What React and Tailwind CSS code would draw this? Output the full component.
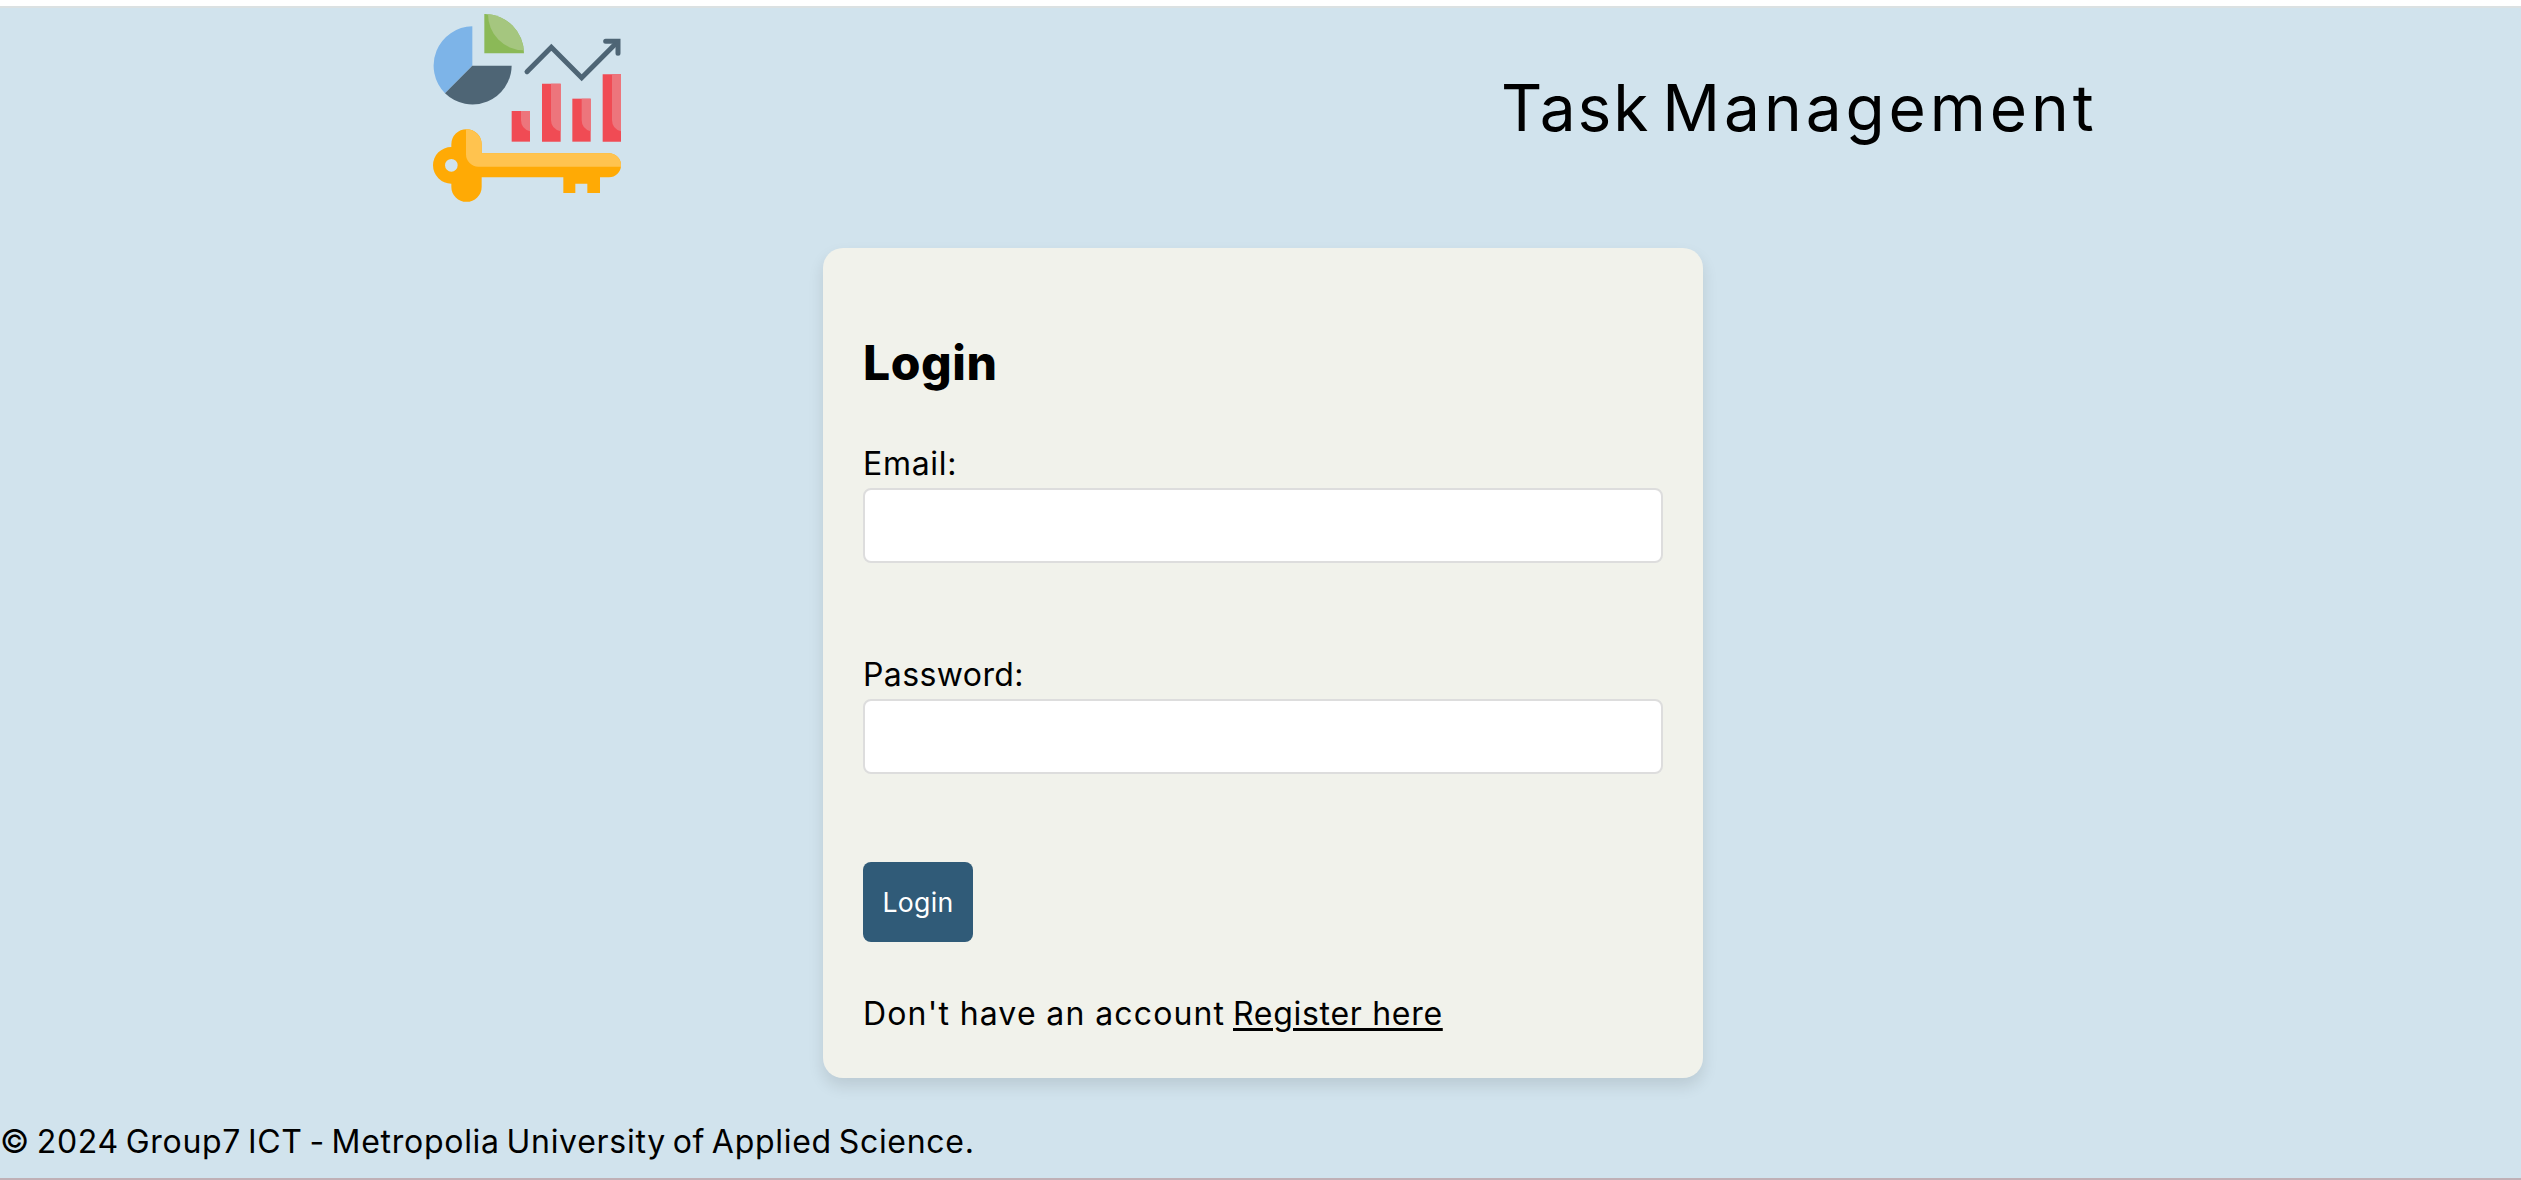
function Logo() {
  return (
    <svg viewBox="39 42 564 564" className="h-[188px] w-[188px]" aria-label="Task Management logo">
      <path d="M157 79A118 118 0 0 0 75 280L157 197Z" fill="#7db4e8" />
      <path d="M157 197H275A118 118 0 0 1 75 280Z" fill="#4e6575" />
      <path d="M193 42A118 118 0 0 1 312 160H193Z" fill="#8bb957" />
      <path d="M204 42A118 118 0 0 1 311 151A108 108 0 0 1 204 42Z" fill="#a5c67f" />
      <g fill="none" stroke="#4e6575" strokeWidth="15" strokeLinecap="round">
        <path d="M321 215L394 142L485 233L592 126" strokeLinejoin="miter" />
        <path d="M557 124H594V160" strokeLinejoin="miter" />
      </g>
      <g fill="#f04b54">
        <path d="M275 333H330V425H275Z" />
        <path d="M366 251H422V425H366Z" />
        <path d="M457 296H512V425H457Z" />
        <path d="M548 223H603V425H548Z" />
      </g>
      <g fill="#ed757c">
        <path d="M303 333H330V394Q303 386 303 360Z" />
        <path d="M393 251H422V394Q393 386 393 360Z" />
        <path d="M485 296H512V394Q485 386 485 360Z" />
        <path d="M576 223H603V394Q576 386 576 360Z" />
      </g>
      <path
        fillRule="evenodd"
        fill="#ffaa05"
        d="M94 441V433A45.5 45.5 0 0 1 185 433V460H567A36 36 0 0 1 567 532H540V579H502V551H466V579H430V532H185V560A45.5 45.5 0 0 1 94 560V551A55 55 0 0 1 94 441ZM94 477A19 19 0 1 0 94 515A19 19 0 1 0 94 477Z"
      />
      <path d="M138 387.5A46 46 0 0 1 185 433V460H567A36 36 0 0 1 603 500H175A37 37 0 0 1 138 463Z" fill="#ffc34f" />
    </svg>
  );
}

function Field({ label, type, className }) {
  return (
    <label className="block">
      <span className={`block h-12 pt-px leading-[48px] ${className}`}>{label}</span>
      <input
        type={type}
        className="mt-px block h-[75px] w-full rounded-lg border-2 border-[#dddddd] bg-white px-4 outline-none"
      />
    </label>
  );
}

export default function App() {
  return (
    <div className="flex h-[1180px] flex-col overflow-hidden border-t-[6px] border-b-2 border-t-white border-b-[#c0b0b6] bg-[#d1e3ed] font-['Inter',sans-serif] text-[32px] font-normal text-black">
      <div className="h-0.5 shrink-0 bg-[#dbe1e2]" />
      <header className="flex h-[200px] shrink-0 items-center justify-between pr-[420px] pl-[433px]">
        <Logo />
        <h1 className="w-[600px] text-[64px] leading-[96px] tracking-[3.9px] [word-spacing:-10px] whitespace-nowrap">
          <span className="tracking-[2px]">Task</span> Management
        </h1>
      </header>

      <main className="mt-10 ml-[823px] h-[830px] w-[880px] shrink-0 rounded-[20px] bg-[#f1f2eb] px-10 pt-[79px] shadow-[0_8px_16px_rgba(0,0,0,0.11)]">
        <h2 className="text-[48px] leading-[72px] font-extrabold tracking-[0.6px]">Login</h2>
        <form className="mt-10">
          <Field label="Email:" type="email" className="tracking-[0.7px]" />
          <div className="mt-[87px]">
            <Field label="Password:" type="password" className="tracking-[0.4px]" />
          </div>
          <button
            type="button"
            className="mt-[88px] flex h-20 w-[110px] items-center justify-center rounded-lg bg-[#305b78] text-[26.67px] tracking-[0.3px] text-white"
          >
            Login
          </button>
        </form>
        <p className="mt-[48px] flex leading-[48px] whitespace-nowrap">
          <span className="w-[370px] tracking-[1.15px] [word-spacing:-0.5px]">Don't have an account</span>
          <a className="tracking-[0.7px] underline decoration-[3px] underline-offset-[3px]">Register here</a>
        </p>
      </main>

      <footer className="mt-[40px] leading-[48px] tracking-[0.72px] [word-spacing:-3px] whitespace-nowrap">
        © 2024 Group7 ICT - Metropolia University of Applied Science.
      </footer>
    </div>
  );
}
